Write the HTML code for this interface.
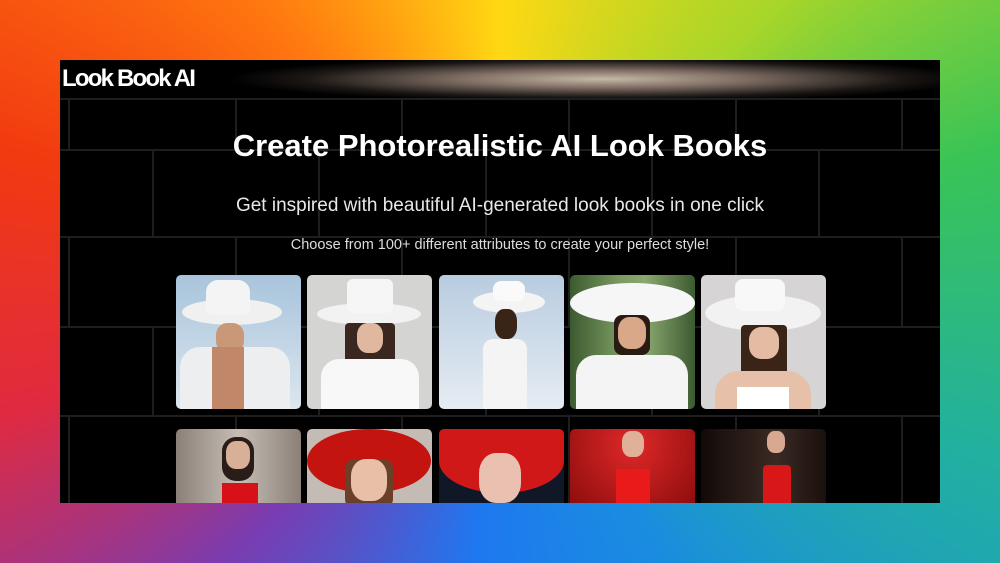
<!DOCTYPE html>
<html><head><meta charset="utf-8"><style>
*{margin:0;padding:0;box-sizing:border-box}
body{width:1000px;height:563px;overflow:hidden;position:relative;font-family:"Liberation Sans",sans-serif;
background:conic-gradient(from 0deg at 50% 50%,#ffd812 0deg,#a8d62a 45deg,#3ac456 75deg,#22b0a0 110deg,#1a8ce0 150deg,#1e78f0 185deg,#7a3cb0 225deg,#e02a40 255deg,#f23a10 285deg,#ff7a10 320deg,#ffd812 360deg);}
.panel{position:absolute;left:60px;top:60px;width:880px;height:443px;background:#000;overflow:hidden}
.grid{position:absolute;inset:0;background:#000}
.h{position:absolute;left:0;width:880px;height:2px;background:#1e1e1e}
.v{position:absolute;width:2px;background:#1e1e1e}
.glow{position:absolute;left:130px;top:0;width:750px;height:38px;background:radial-gradient(ellipse 50% 60% at 55% 50%,#c8b8a8 0%,#7a6a60 40%,#1a1614 80%,#000 100%)}
.logo{position:absolute;left:2px;top:5px;color:#fff;font-weight:bold;font-size:24px;letter-spacing:-1.8px}
h1{position:absolute;top:68px;width:880px;text-align:center;color:#fff;font-size:31px;font-weight:bold}
.s1{position:absolute;top:135px;width:880px;text-align:center;color:#e8e8e8;font-size:19px}
.s2{position:absolute;top:177px;width:880px;text-align:center;color:#ddd;font-size:14.5px}
.c{position:absolute;width:125px;border-radius:5px;overflow:hidden}
</style></head><body>
<div class="panel">
<div class="grid">
<div class="h" style="top:38px"></div><div class="h" style="top:89px"></div><div class="h" style="top:176px"></div><div class="h" style="top:266px"></div><div class="h" style="top:355px"></div>
<div class="v" style="left:8px;top:38px;height:51px"></div><div class="v" style="left:175px;top:38px;height:51px"></div><div class="v" style="left:341px;top:38px;height:51px"></div><div class="v" style="left:508px;top:38px;height:51px"></div><div class="v" style="left:675px;top:38px;height:51px"></div><div class="v" style="left:841px;top:38px;height:51px"></div>
<div class="v" style="left:92px;top:89px;height:87px"></div><div class="v" style="left:258px;top:89px;height:87px"></div><div class="v" style="left:425px;top:89px;height:87px"></div><div class="v" style="left:591px;top:89px;height:87px"></div><div class="v" style="left:758px;top:89px;height:87px"></div>
<div class="v" style="left:8px;top:176px;height:90px"></div><div class="v" style="left:175px;top:176px;height:90px"></div><div class="v" style="left:341px;top:176px;height:90px"></div><div class="v" style="left:508px;top:176px;height:90px"></div><div class="v" style="left:675px;top:176px;height:90px"></div><div class="v" style="left:841px;top:176px;height:90px"></div>
<div class="v" style="left:92px;top:266px;height:89px"></div><div class="v" style="left:258px;top:266px;height:89px"></div><div class="v" style="left:425px;top:266px;height:89px"></div><div class="v" style="left:591px;top:266px;height:89px"></div><div class="v" style="left:758px;top:266px;height:89px"></div>
<div class="v" style="left:8px;top:355px;height:90px"></div><div class="v" style="left:175px;top:355px;height:90px"></div><div class="v" style="left:341px;top:355px;height:90px"></div><div class="v" style="left:508px;top:355px;height:90px"></div><div class="v" style="left:675px;top:355px;height:90px"></div><div class="v" style="left:841px;top:355px;height:90px"></div>
</div>
<div class="glow"></div>
<div class="logo">Look Book AI</div>
<h1>Create Photorealistic AI Look Books</h1>
<div class="s1">Get inspired with beautiful AI-generated look books in one click</div>
<div class="s2">Choose from 100+ different attributes to create your perfect style!</div>

<div class="c" style="left:116px;top:215px;height:134px;background:linear-gradient(#a8c4dc,#dce6ee)">
<div style="position:absolute;left:6px;top:24px;width:100px;height:26px;border-radius:50%;background:#f0f0f0"></div>
<div style="position:absolute;left:30px;top:5px;width:44px;height:35px;border-radius:12px 12px 4px 4px;background:#f4f4f4"></div>
<div style="position:absolute;left:40px;top:48px;width:28px;height:30px;background:#c89878;border-radius:40%"></div>
<div style="position:absolute;left:4px;top:72px;width:110px;height:62px;background:#eceef0;border-radius:20px 20px 0 0"></div>
<div style="position:absolute;left:36px;top:72px;width:32px;height:62px;background:#c08868"></div></div>

<div class="c" style="left:247px;top:215px;height:134px;background:#d4d4d2">
<div style="position:absolute;left:10px;top:28px;width:104px;height:22px;border-radius:50%;background:#f2f2f2"></div>
<div style="position:absolute;left:40px;top:4px;width:46px;height:34px;background:#f6f6f6;border-radius:6px"></div>
<div style="position:absolute;left:38px;top:48px;width:50px;height:40px;background:#3a2820;border-radius:4px"></div>
<div style="position:absolute;left:50px;top:48px;width:26px;height:30px;background:#e0b8a0;border-radius:40%"></div>
<div style="position:absolute;left:14px;top:84px;width:98px;height:50px;background:#f8f8f8;border-radius:18px 18px 0 0"></div></div>

<div class="c" style="left:379px;top:215px;height:134px;background:linear-gradient(#b8cce0,#e6ecf2)">
<div style="position:absolute;left:34px;top:16px;width:72px;height:22px;border-radius:50%;background:#f4f4f4"></div>
<div style="position:absolute;left:54px;top:6px;width:32px;height:20px;background:#fafafa;border-radius:8px"></div>
<div style="position:absolute;left:56px;top:34px;width:22px;height:30px;background:#3a2418;border-radius:40%"></div>
<div style="position:absolute;left:44px;top:64px;width:44px;height:70px;background:#f4f4f4;border-radius:10px 10px 0 0"></div></div>

<div class="c" style="left:510px;top:215px;height:134px;background:linear-gradient(90deg,#3c5a30,#7a9a62 40%,#8aa870 60%,#3c5a30)">
<div style="position:absolute;left:0;top:8px;width:125px;height:40px;border-radius:50%;background:#f6f6f6"></div>
<div style="position:absolute;left:44px;top:40px;width:36px;height:40px;background:#2a1a14;border-radius:8px"></div>
<div style="position:absolute;left:48px;top:42px;width:28px;height:32px;background:#d8a888;border-radius:40%"></div>
<div style="position:absolute;left:6px;top:80px;width:112px;height:54px;background:#f4f4f4;border-radius:20px 20px 0 0"></div></div>

<div class="c" style="left:641px;top:215px;height:134px;background:#d6d4d4">
<div style="position:absolute;left:4px;top:20px;width:116px;height:36px;border-radius:50%;background:#f2f2f2"></div>
<div style="position:absolute;left:34px;top:4px;width:50px;height:32px;background:#f8f8f8;border-radius:8px"></div>
<div style="position:absolute;left:40px;top:50px;width:46px;height:56px;background:#3a2418;border-radius:4px"></div>
<div style="position:absolute;left:48px;top:52px;width:30px;height:32px;background:#e4bca4;border-radius:40%"></div>
<div style="position:absolute;left:14px;top:96px;width:96px;height:38px;background:#e6c0a8;border-radius:24px 24px 0 0"></div>
<div style="position:absolute;left:36px;top:112px;width:52px;height:22px;background:#fff"></div></div>

<div class="c" style="left:116px;top:369px;height:80px;background:linear-gradient(90deg,#8a8078,#c6beb4 50%,#8a8078)">
<div style="position:absolute;left:46px;top:8px;width:32px;height:44px;background:#2a1c18;border-radius:14px"></div>
<div style="position:absolute;left:50px;top:12px;width:24px;height:28px;background:#d8b098;border-radius:40%"></div>
<div style="position:absolute;left:46px;top:54px;width:36px;height:26px;background:#d8101a"></div></div>

<div class="c" style="left:247px;top:369px;height:80px;background:#c4bcb4">
<div style="position:absolute;left:0;top:0;width:124px;height:64px;border-radius:50%;background:#c41410"></div>
<div style="position:absolute;left:38px;top:30px;width:48px;height:50px;background:#6a4028;border-radius:10px"></div>
<div style="position:absolute;left:44px;top:30px;width:36px;height:42px;background:#e8c0a8;border-radius:40%"></div></div>

<div class="c" style="left:379px;top:369px;height:80px;background:#101828">
<div style="position:absolute;left:0;top:0;width:125px;height:64px;border-radius:0 0 50% 50%;background:#d01818"></div>
<div style="position:absolute;left:40px;top:24px;width:42px;height:50px;background:#eac0b0;border-radius:40%"></div></div>

<div class="c" style="left:510px;top:369px;height:80px;background:radial-gradient(ellipse at 50% 20%,#e02828,#8a0c0c)">
<div style="position:absolute;left:52px;top:2px;width:22px;height:26px;background:#e0b098;border-radius:40%"></div>
<div style="position:absolute;left:46px;top:40px;width:34px;height:40px;background:#e81a1a"></div></div>

<div class="c" style="left:641px;top:369px;height:80px;background:linear-gradient(90deg,#120a08,#3a2a24 60%,#1a100c)">
<div style="position:absolute;left:66px;top:2px;width:18px;height:22px;background:#d8a890;border-radius:40%"></div>
<div style="position:absolute;left:62px;top:36px;width:28px;height:44px;background:#d81818;border-radius:4px 4px 0 0"></div></div>
</div>
</body></html>
